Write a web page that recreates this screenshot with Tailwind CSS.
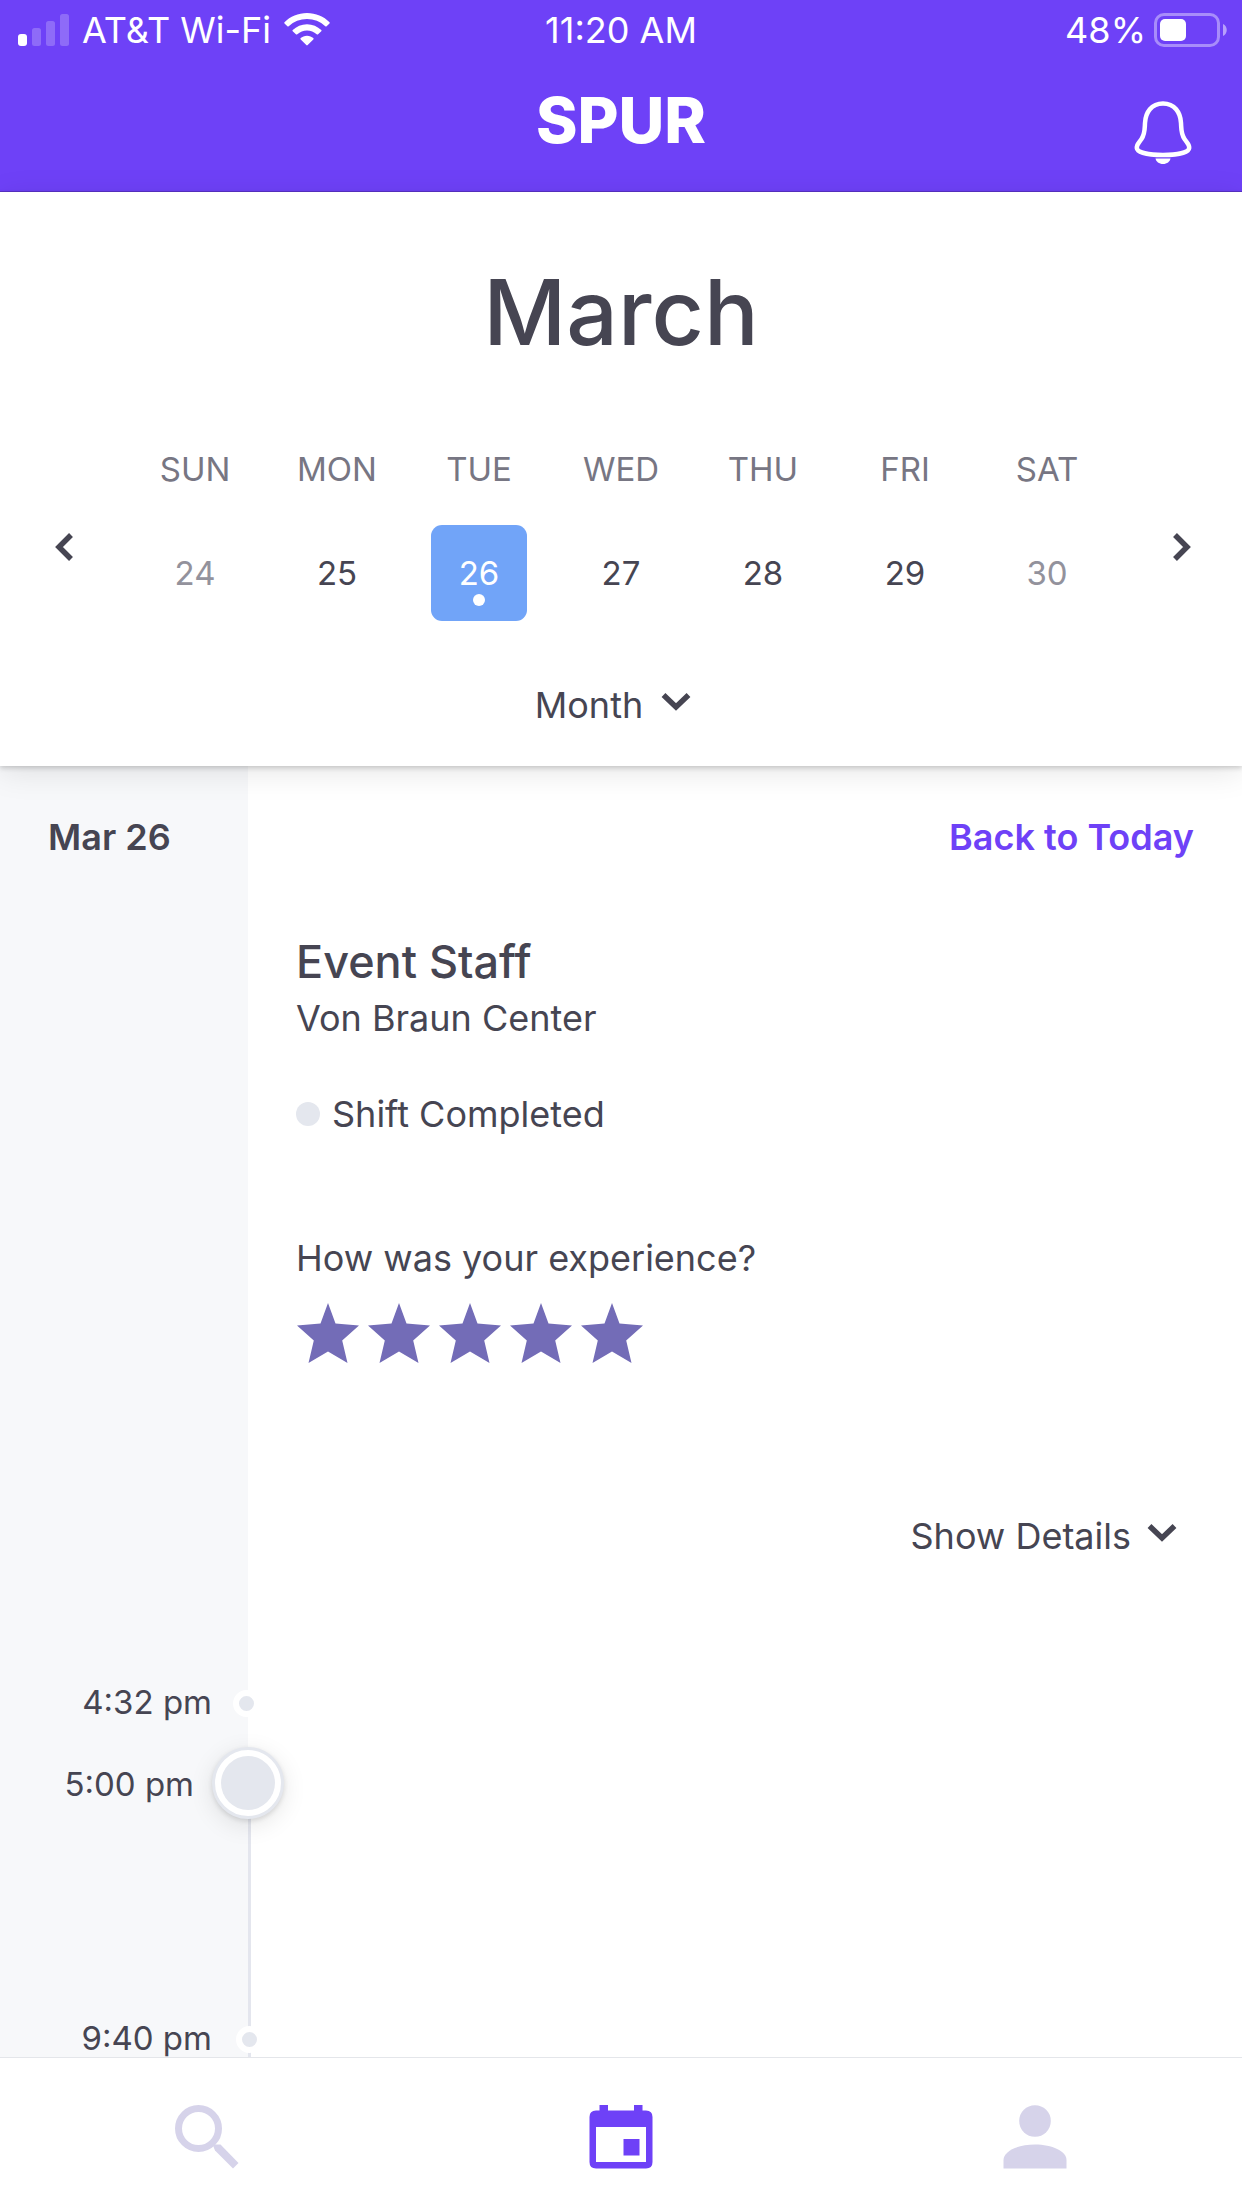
<!DOCTYPE html>
<html lang="en">
<head>
<meta charset="utf-8">
<meta name="viewport" content="width=device-width, initial-scale=1">
<title>Spur – Schedule</title>
<script src="https://cdn.jsdelivr.net/npm/@tailwindcss/browser@4"></script>
</head>
<body class="flex h-screen flex-col overflow-hidden bg-white font-['Inter',sans-serif] text-[#464552]">

<header class="shrink-0 border-b border-[#5a32c8] bg-[#6e41f7] text-white">
  <!-- Status bar -->
  <div class="grid h-[59px] grid-cols-3 items-center text-[36px] leading-[48px]">
    <div class="flex items-center gap-[13px] pl-[18px]">
      <svg class="h-8 w-[51px]" viewBox="0 0 51 32" fill="#fff" aria-hidden="true">
        <rect x="0" y="20" width="9" height="12" rx="3"/>
        <g opacity=".22"><rect x="14" y="14" width="9" height="18" rx="2.500"/><rect x="28" y="7" width="9" height="25" rx="2.500"/><rect x="42" y="0" width="9" height="32" rx="2.500"/></g>
      </svg>
      <span class="whitespace-nowrap">AT&amp;T Wi-Fi</span>
      <svg class="h-[33px] w-[46px]" viewBox="0 0 46 33" fill="#fff" aria-hidden="true">
        <path d="M23 0C14.200 0 6.200 3.500.500 9.200Q0 9.800.500 10.400L3.400 13.300Q4 13.900 4.700 13.300A26.500 26.500 0 0 1 41.300 13.300Q42 13.900 42.600 13.300L45.500 10.400Q46 9.800 45.500 9.200C39.800 3.500 31.800 0 23 0Z"/>
        <path d="M23 11.200C17.500 11.200 12.500 13.400 8.700 17Q8.100 17.600 8.700 18.200L11.900 21.300Q12.600 21.900 13.300 21.300A14.200 14.200 0 0 1 32.700 21.300Q33.400 21.900 34.100 21.300L37.300 18.200Q37.900 17.600 37.300 17C33.500 13.400 28.500 11.200 23 11.200Z"/>
        <path d="M23 22.700C20.500 22.700 18.300 23.600 16.700 25.100Q16 25.800 16.700 26.400L22.300 32.100Q23 32.800 23.700 32.100L29.300 26.400Q30 25.800 29.300 25.100C27.700 23.600 25.500 22.700 23 22.700Z"/>
      </svg>
    </div>
    <div class="text-center">11:20 AM</div>
    <div class="flex items-center justify-end gap-2 pr-[14px]">
      <span>48%</span>
      <svg class="h-[34px] w-[74px]" viewBox="0 0 74 34" fill="#fff" aria-hidden="true">
        <rect x="1.500" y="1.500" width="63" height="31" rx="8.500" fill="none" stroke="#fff" stroke-opacity=".4" stroke-width="3"/>
        <rect x="6" y="6" width="26" height="22" rx="5"/>
        <path d="M69 11C74 13 74 21 69 23Z" opacity=".5"/>
      </svg>
    </div>
  </div>
  <!-- Title bar -->
  <div class="grid h-[132px] grid-cols-3 items-start pt-[29px]">
    <div></div>
    <div class="text-center text-[63px] leading-[64px] font-extrabold">SPUR</div>
    <button type="button" aria-label="Notifications" class="mt-3 mr-[49px] justify-self-end">
      <svg class="block h-16 w-[60px]" viewBox="0 0 60 64" aria-hidden="true">
        <path d="M30 3.500C18.500 3.500 12.500 12.500 12 23C11.600 30 12 34 8.500 39C5.500 43.300 3.500 44.500 3.800 48C4.300 52.800 16 55 30 55S55.700 52.800 56.200 48C56.500 44.500 54.500 43.300 51.500 39C48 34 48.400 30 48 23C47.500 12.500 41.500 3.500 30 3.500Z" fill="none" stroke="#fff" stroke-width="4.500"/>
        <path d="M22.500 58.500H37.500C37 61.500 34 64 30 64S23 61.500 22.500 58.500Z" fill="#fff"/>
      </svg>
    </button>
  </div>
</header>

<!-- Week picker -->
<section class="relative z-10 shrink-0 bg-white pt-[72px] pb-[37px] shadow-[0_2px_5px_rgba(0,0,0,0.18),0_6px_30px_rgba(0,0,0,0.10)]">
  <h1 class="text-center text-[91px] leading-[96px] font-medium">March</h1>
  <div class="mt-[89px] grid grid-cols-[124px_1fr_124px] items-center">
    <button type="button" aria-label="Previous week" class="justify-self-start pt-6 pl-[55px]">
      <svg class="block h-7 w-[18px]" viewBox="0 0 18 28" fill="none" stroke="#464552" stroke-width="5.500" aria-hidden="true"><path d="M16 2L4 14L16 26"/></svg>
    </button>
    <ol class="grid grid-cols-7 text-center text-[33px] leading-10">
      <li class="flex flex-col items-center gap-9"><span class="text-[#777683]">SUN</span><button type="button" class="h-24 w-24 text-[#93929c]">24</button></li>
      <li class="flex flex-col items-center gap-9"><span class="text-[#777683]">MON</span><button type="button" class="h-24 w-24">25</button></li>
      <li class="flex flex-col items-center gap-9"><span class="text-[#777683]">TUE</span><button type="button" aria-current="date" class="relative h-24 w-24 rounded-[11px] bg-[#71a4f8] text-white">26<span class="absolute bottom-[15px] left-[42px] h-3 w-3 rounded-full bg-white"></span></button></li>
      <li class="flex flex-col items-center gap-9"><span class="text-[#777683]">WED</span><button type="button" class="h-24 w-24">27</button></li>
      <li class="flex flex-col items-center gap-9"><span class="text-[#777683]">THU</span><button type="button" class="h-24 w-24">28</button></li>
      <li class="flex flex-col items-center gap-9"><span class="text-[#777683]">FRI</span><button type="button" class="h-24 w-24">29</button></li>
      <li class="flex flex-col items-center gap-9"><span class="text-[#777683]">SAT</span><button type="button" class="h-24 w-24 text-[#93929c]">30</button></li>
    </ol>
    <button type="button" aria-label="Next week" class="justify-self-end pt-6 pr-[51px]">
      <svg class="block h-7 w-[18px]" viewBox="0 0 18 28" fill="none" stroke="#464552" stroke-width="5.500" aria-hidden="true"><path d="M2 2L14 14L2 26"/></svg>
    </button>
  </div>
  <button type="button" class="mx-auto mt-[60px] flex items-center gap-[18px] pr-4 text-[36px] leading-[48px]">
    Month
    <svg class="mb-[6px] h-[18px] w-[30px]" viewBox="0 0 30 18" fill="none" stroke="#464552" stroke-width="5.500" aria-hidden="true"><path d="M2.500 2L15 14L27.500 2"/></svg>
  </button>
</section>

<!-- Day schedule -->
<main class="flex min-h-0 flex-1 overflow-y-auto text-[36px] leading-[48px] [scrollbar-width:none]">
  <aside class="w-[248px] shrink-0 self-start bg-[#f7f8fa] pt-[47px]">
    <h2 class="pl-12 font-semibold">Mar 26</h2>
    <ol class="mt-[817px] text-[33px]">
      <li class="relative flex h-[82px] items-start justify-end pr-9">
        <time datetime="16:32">4:32 pm</time>
        <span class="absolute top-[12px] -right-3 h-[27px] w-[27px] rounded-full border-6 border-white bg-[#e4e7ee]"></span>
      </li>
      <li class="relative flex h-[254px] items-start justify-end pr-[54px]">
        <time datetime="17:00">5:00 pm</time>
        <span class="absolute top-6 -bottom-12 left-full w-[3px] bg-[#e4e6ee]"></span>
        <span class="absolute -top-[13px] -right-9 h-[72px] w-[72px] rounded-full border-3 border-[#e4e7ee] bg-white p-[6px] shadow-[0_2px_5px_rgba(0,0,0,0.12),0_6px_24px_rgba(0,0,0,0.10)]"><span class="block h-full w-full rounded-full bg-[#e4e7ee]"></span></span>
      </li>
      <li class="relative flex items-start justify-end pr-9">
        <time datetime="21:40">9:40 pm</time>
        <span class="absolute top-[12px] -right-[15px] h-[27px] w-[27px] rounded-full border-6 border-white bg-[#e4e7ee]"></span>
      </li>
    </ol>
  </aside>

  <article class="flex-1 px-12 pt-[47px]">
    <div class="text-right"><a href="#today" class="font-semibold text-[#6e41f7]">Back to Today</a></div>
    <h3 class="mt-[73px] text-[45px] leading-[56px] font-medium">Event Staff</h3>
    <p class="mt-1">Von Braun Center</p>
    <p class="mt-12 flex items-center gap-3"><span class="h-6 w-6 rounded-full bg-[#e4e7ee]"></span>Shift Completed</p>
    <fieldset class="mt-24">
      <legend>How was your experience?</legend>
      <div class="mt-[21px] flex gap-[9px] pl-px">
        <label><input type="radio" name="rating" value="1" aria-label="1 star" class="sr-only"><svg class="block h-[60px] w-[62px]" viewBox="0 0 62 60" fill="#736cb7" aria-hidden="true"><path d="M31 0L38.500 20.500L62 22.500L45.200 37.500L50.500 60L31 48.500L11.500 60L16.800 37.500L0 22.500L23.500 20.500Z"/></svg></label>
        <label><input type="radio" name="rating" value="2" aria-label="2 stars" class="sr-only"><svg class="block h-[60px] w-[62px]" viewBox="0 0 62 60" fill="#736cb7" aria-hidden="true"><path d="M31 0L38.500 20.500L62 22.500L45.200 37.500L50.500 60L31 48.500L11.500 60L16.800 37.500L0 22.500L23.500 20.500Z"/></svg></label>
        <label><input type="radio" name="rating" value="3" aria-label="3 stars" class="sr-only"><svg class="block h-[60px] w-[62px]" viewBox="0 0 62 60" fill="#736cb7" aria-hidden="true"><path d="M31 0L38.500 20.500L62 22.500L45.200 37.500L50.500 60L31 48.500L11.500 60L16.800 37.500L0 22.500L23.500 20.500Z"/></svg></label>
        <label><input type="radio" name="rating" value="4" aria-label="4 stars" class="sr-only"><svg class="block h-[60px] w-[62px]" viewBox="0 0 62 60" fill="#736cb7" aria-hidden="true"><path d="M31 0L38.500 20.500L62 22.500L45.200 37.500L50.500 60L31 48.500L11.500 60L16.800 37.500L0 22.500L23.500 20.500Z"/></svg></label>
        <label><input type="radio" name="rating" value="5" aria-label="5 stars" checked class="sr-only"><svg class="block h-[60px] w-[62px]" viewBox="0 0 62 60" fill="#736cb7" aria-hidden="true"><path d="M31 0L38.500 20.500L62 22.500L45.200 37.500L50.500 60L31 48.500L11.500 60L16.800 37.500L0 22.500L23.500 20.500Z"/></svg></label>
      </div>
    </fieldset>
    <button type="button" class="mt-[149px] ml-auto flex items-center gap-4 pr-[17px]">
      Show Details
      <svg class="mb-[6px] h-[18px] w-[30px]" viewBox="0 0 30 18" fill="none" stroke="#464552" stroke-width="5.500" aria-hidden="true"><path d="M2.500 2L15 14L27.500 2"/></svg>
    </button>
  </article>
</main>

<!-- Tab bar -->
<nav class="relative z-10 grid h-[151px] shrink-0 grid-cols-3 items-center justify-items-center border-t border-[#e4e6ea] bg-white pt-2">
  <a href="#search" aria-label="Search">
    <svg class="block h-16 w-16" viewBox="0 0 64 64" aria-hidden="true"><circle cx="23.500" cy="23.500" r="20" fill="none" stroke="#d6d3ea" stroke-width="7"/><path d="M40 39.500H45.500L63.500 58L58 63.500L40 45.500L38 40.500Z" fill="#d6d3ea"/></svg>
  </a>
  <a href="#schedule" aria-label="Schedule" aria-current="page">
    <svg class="block h-16 w-16" viewBox="0 0 64 64" fill="#6e41f7" aria-hidden="true"><path fill-rule="evenodd" d="M10.500 0H19V5.500H45V0H53.500V5.500H57Q63.500 5.500 63.500 12V57Q63.500 63.500 57 63.500H7Q.500 63.500 .500 57V12Q.500 5.500 7 5.500H10.500ZM7 22V57H57V22Z"/><rect x="34.500" y="34" width="16" height="16.500"/></svg>
  </a>
  <a href="#profile" aria-label="Profile">
    <svg class="block h-16 w-16" viewBox="0 0 64 64" fill="#d6d3ea" aria-hidden="true"><circle cx="32" cy="16" r="15.800"/><path d="M.500 63.500V55C.500 46 15 39.500 32 39.500S63.500 46 63.500 55V63.500Z"/></svg>
  </a>
</nav>
</body>
</html>
